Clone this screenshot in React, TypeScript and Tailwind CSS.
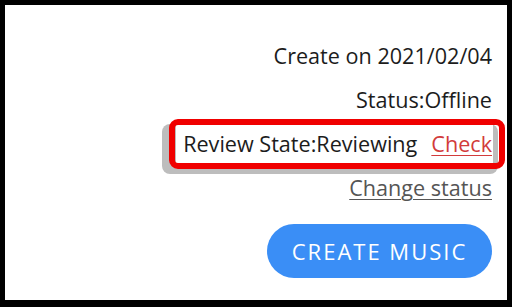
export default function App() {
  return (
    <div
      className="box-border h-[307px] w-[512px] overflow-hidden border-t-[5px] border-r-[5px] border-b-[7px] border-l-[5px] border-black bg-white"
      style={{ fontFamily: '"Open Sans", "Noto Sans", sans-serif' }}
    >
      <div className="flex flex-col items-end pt-[29px] pr-[15px] text-[21.6px] text-[#1c1c1c]">

        <div className="flex h-[44px] items-center">
          Create on 2021/02/04
        </div>

        <div className="flex h-[44px] items-center">
          Status:Offline
        </div>

        <div className="flex h-[44px] items-center">
          <div className="relative mr-[-1px]">
            <div className="absolute top-[-1px] right-[-5px] bottom-[-11px] left-[-14px] rounded-[8px] bg-[#bdbdbd]" />
            <div className="relative flex h-[38px] items-center gap-[14px] bg-white pr-[1px] pl-[7px]">
              <span>Review State:Reviewing</span>
              <a className="text-[#d23b3b] underline underline-offset-[3px] decoration-1">
                Check
              </a>
            </div>
            <div className="absolute top-[-6px] right-[-12px] bottom-[-6px] left-[-7px] rounded-[9px] border-[6px] border-[#f00000]" />
          </div>
        </div>

        <div className="flex h-[44px] items-center">
          <a className="text-[#555555] underline underline-offset-[3px] decoration-1">
            Change status
          </a>
        </div>

        <button className="mt-[14px] flex h-[54px] w-[225px] items-center justify-center rounded-full bg-[#3a8ef6] text-[22px] font-medium tracking-[2px] text-white">
          CREATE MUSIC
        </button>

      </div>
    </div>
  );
}
